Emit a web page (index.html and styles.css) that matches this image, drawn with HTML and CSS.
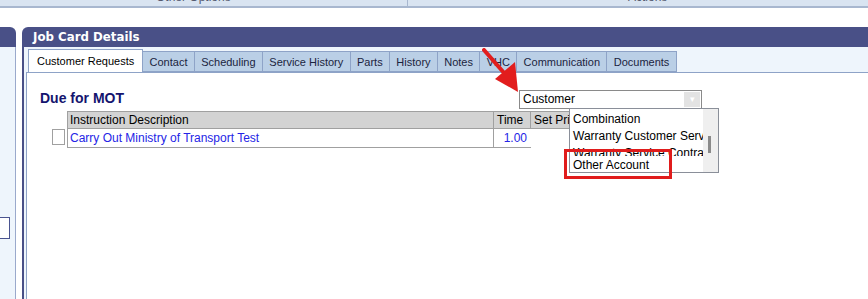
FILE: index.html
```html
<!DOCTYPE html>
<html lang="en">
<head>
<meta charset="UTF-8" />
<title>Job Card Details</title>
<link rel="stylesheet" href="styles.css">
</head>
<body>

<div class="topbar">
  <div class="topbar-cell cell-left"><span>Other Options</span></div>
  <div class="topbar-cell cell-right"><span>Actions</span></div>
</div>

<div class="workspace">
  <aside class="side-panel">
    <div class="side-header"></div>
    <div class="side-body">
      <div class="side-box"></div>
    </div>
  </aside>

  <section class="job-panel">
    <header class="job-header">Job Card Details</header>
    <div class="job-body">
      <nav class="tabs">
        <div class="tab active">Customer Requests</div>
        <div class="tab">Contact</div>
        <div class="tab">Scheduling</div>
        <div class="tab">Service History</div>
        <div class="tab">Parts</div>
        <div class="tab">History</div>
        <div class="tab">Notes</div>
        <div class="tab">VHC</div>
        <div class="tab">Communication</div>
        <div class="tab">Documents</div>
      </nav>

      <div class="tab-content">
        <div class="request-top">
          <h2 class="request-title">Due for MOT</h2>
          <div class="combo">
            <span class="combo-value">Customer</span>
            <span class="combo-btn">&#9662;</span>
          </div>
        </div>

        <div class="request-grid">
          <div class="check-col">
            <div class="check-box"></div>
          </div>
          <div class="grid">
            <div class="grid-row grid-head">
              <div class="col-desc">Instruction Description</div>
              <div class="col-time">Time</div>
              <div class="col-price">Set Pri</div>
            </div>
            <div class="grid-row grid-data">
              <div class="col-desc">Carry Out Ministry of Transport Test</div>
              <div class="col-time">1.00</div>
            </div>
          </div>
        </div>

        <!-- open list of the payer combo -->
        <div class="combo-list">
          <div class="list-items">
            <div class="list-item">Combination</div>
            <div class="list-item">Warranty Customer Service</div>
            <div class="list-item">Warranty Service Contract</div>
            <div class="list-item">Other Account</div>
          </div>
          <div class="list-scroll"><span class="scroll-thumb"></span></div>
        </div>
        <div class="highlight"></div>
      </div>
    </div>
  </section>
</div>

<svg class="arrow" width="42" height="46" viewBox="0 0 42 46">
  <line x1="2" y1="2" x2="23" y2="26" stroke="#e21d1d" stroke-width="4" stroke-linecap="round" />
  <polygon points="13,31 33,14 36,44" fill="#e21d1d" />
</svg>

</body>
</html>
```

FILE: styles.css
```css
:root {
  --navy: #495087;
  --pale: #eef5fc;
  --tab-bg: #bacfe6;
  --tab-line: #8ea3c7;
  --grid-line: #a0a0a0;
  --link-blue: #2424e6;
}
* {
  box-sizing: border-box;
}
body {
  margin: 0;
  width: 868px;
  height: 299px;
  overflow: hidden;
  background: #fff;
  font-family: 'Liberation Sans', Arial, sans-serif;
  font-size: 12px;
  color: #000;
  position: relative;
}
.topbar {
  display: flex;
  height: 8px;
  background: #d9e4f1;
  border-bottom: 2px solid #a8b7cf;
  overflow: hidden;
}
.topbar-cell {
  position: relative;
  font-size: 12px;
  color: #555a70;
}
.topbar-cell span {
  position: absolute;
  top: -10px;
  white-space: nowrap;
}
.cell-left {
  width: 408px;
  border-right: 1px solid #a8b7cf;
}
.cell-left span {
  left: 156px;
}
.cell-right {
  flex: 1;
}
.cell-right span {
  left: 220px;
}
.workspace {
  display: flex;
  gap: 6px;
  margin-top: 19px;
  height: 272px;
}
.side-panel {
  width: 16px;
  display: flex;
  flex-direction: column;
}
.side-header {
  height: 20px;
  background: var(--navy);
  border-top-right-radius: 6px;
}
.side-body {
  flex: 1;
  background: var(--pale);
  border-right: 1px solid #9aa9cc;
  padding-top: 170px;
}
.side-box {
  width: 10px;
  height: 22px;
  background: #fff;
  border: 1px solid #4a5490;
  border-left: none;
}
.job-panel {
  flex: 1;
  display: flex;
  flex-direction: column;
}
.job-header {
  height: 20px;
  background: var(--navy);
  border-top-left-radius: 6px;
  color: #fff;
  font-family: 'DejaVu Sans', sans-serif;
  font-weight: bold;
  font-size: 11.8px;
  line-height: 20px;
  padding-left: 11px;
}
.job-body {
  flex: 1;
  display: flex;
  flex-direction: column;
  background: var(--pale);
  border-left: 2px solid var(--navy);
  padding: 3px 0 0 2px;
}
.tabs {
  display: flex;
  padding-left: 2px;
  height: 22px;
  position: relative;
  z-index: 1;
}
.tab {
  height: 21px;
  margin-top: 1px;
  padding: 0 6.35px;
  line-height: 20px;
  font-size: 11px;
  color: #1b2440;
  background: var(--tab-bg);
  border: 1px solid var(--tab-line);
  border-left: none;
}
.tab.active {
  height: 23px;
  margin-top: -1px;
  padding: 0 8px;
  line-height: 22px;
  background: #fff;
  border-left: 1px solid var(--tab-line);
  border-bottom: none;
  color: #000;
}
.tab-content {
  flex: 1;
  background: #fff;
  border-top: 1px solid var(--tab-line);
  border-left: 1px solid var(--tab-line);
  position: relative;
  padding: 17px 0 0 13px;
}
.request-top {
  display: flex;
  align-items: flex-start;
}
.request-title {
  margin: 0;
  width: 479px;
  font-size: 14px;
  font-weight: bold;
  color: #14146e;
}
.combo {
  width: 183px;
  height: 19px;
  display: flex;
  border: 1px solid #8a8a8a;
  background: #fff;
}
.combo-value {
  flex: 1;
  padding-left: 3px;
  line-height: 17px;
  font-size: 12px;
}
.combo-btn {
  width: 16px;
  margin: 1px;
  background: #e3e3e3;
  color: #fff;
  font-size: 9px;
  line-height: 14px;
  text-align: center;
}
.request-grid {
  display: flex;
  margin-top: 2px;
}
.check-col {
  width: 27px;
  padding-top: 18px;
  padding-left: 12px;
}
.check-box {
  width: 13px;
  height: 16px;
  border: 1px solid var(--grid-line);
}
.grid {
  width: 464px;
  border-left: 1px solid var(--grid-line);
}
.grid-row {
  display: flex;
  height: 19px;
  line-height: 18px;
  border-bottom: 1px solid var(--grid-line);
}
.grid-head {
  height: 18px;
  line-height: 17px;
  background: #d3d3d3;
  border-top: 1px solid var(--grid-line);
}
.col-desc {
  width: 426px;
  padding-left: 2px;
  border-right: 1px solid var(--grid-line);
}
.col-time {
  width: 37px;
  padding: 0 3px;
}
.grid-head .col-time {
  border-right: 1px solid var(--grid-line);
}
.grid-data .col-time {
  text-align: right;
  color: var(--link-blue);
  padding-right: 4px;
}
.grid-data .col-desc {
  color: var(--link-blue);
}
.col-price {
  width: 40px;
  margin-right: -40px;
  padding-left: 3px;
  white-space: nowrap;
  background: #d3d3d3;
  border-top: 1px solid var(--grid-line);
  border-bottom: 1px solid var(--grid-line);
  margin-top: -1px;
  height: 18px;
}
.combo-list {
  position: absolute;
  left: 542px;
  top: 35px;
  width: 150px;
  height: 65px;
  display: flex;
  background: #fff;
  border: 1px solid #8a8f99;
  z-index: 2;
}
.list-items {
  flex: 1;
  overflow: hidden;
  padding-top: 2px;
}
.list-item {
  height: 17px;
  line-height: 17px;
  padding-left: 3px;
  white-space: nowrap;
  font-size: 12px;
}
.list-item:nth-child(3) {
  height: 11px;
  overflow: hidden;
}
.list-item:nth-child(4) {
  margin-top: 1px;
}
.list-scroll {
  width: 15px;
  background: #efefef;
  position: relative;
}
.scroll-thumb {
  position: absolute;
  left: 5px;
  top: 27px;
  width: 3px;
  height: 17px;
  background: #8a8a8a;
}
.highlight {
  position: absolute;
  left: 537px;
  top: 76px;
  width: 108px;
  height: 30px;
  border: 3px solid #e01c1c;
  z-index: 3;
}
.arrow {
  position: absolute;
  left: 482px;
  top: 48px;
  z-index: 5;
}
```
